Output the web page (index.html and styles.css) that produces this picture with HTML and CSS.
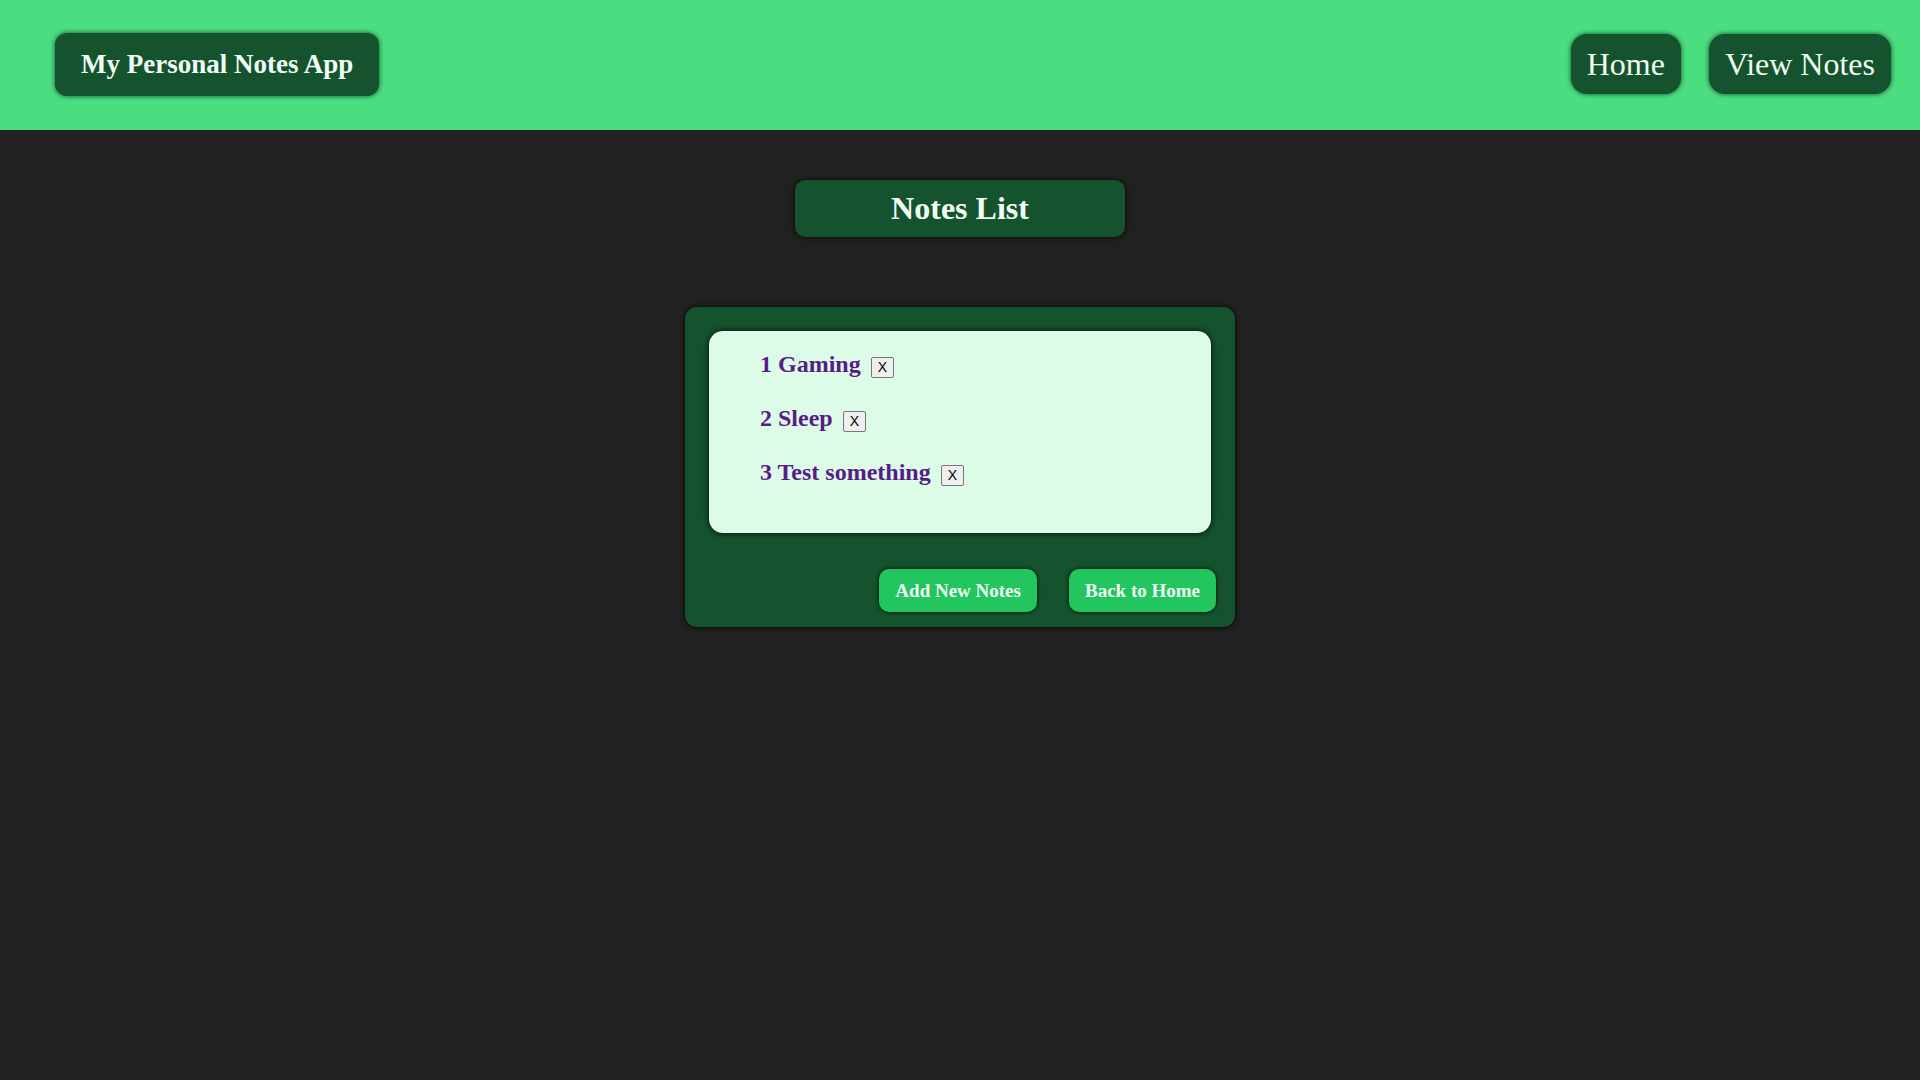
FILE: index.html
```html
<!DOCTYPE html>
<html lang="en">
<head>
<meta charset="utf-8">
<title>My Personal Notes App</title>
<link rel="stylesheet" href="styles.css">
</head>
<body>
<header class="topbar">
  <h1 class="logo">My Personal Notes App</h1>
  <nav class="nav">
    <a class="nav-link" href="#">Home</a>
    <a class="nav-link" href="#">View Notes</a>
  </nav>
</header>
<main class="main">
  <h2 class="page-title">Notes List</h2>
  <section class="card">
    <div class="notes-panel">
      <ul class="notes">
        <li class="note">1 Gaming<button class="remove">X</button></li>
        <li class="note">2 Sleep<button class="remove">X</button></li>
        <li class="note">3 Test something<button class="remove">X</button></li>
      </ul>
    </div>
    <div class="actions">
      <button class="action">Add New Notes</button>
      <button class="action">Back to Home</button>
    </div>
  </section>
</main>
</body>
</html>
```
FILE: styles.css
```css
* { box-sizing: border-box; }
body {
  margin: 0;
  background: #212121;
  font-family: "Liberation Serif", "Times New Roman", serif;
  min-height: 100vh;
}
.topbar {
  height: 130px;
  background: #4ade80;
  display: flex;
  align-items: center;
  justify-content: space-between;
  padding: 0 29px 2px 55px;
}
.logo {
  margin: 0;
  height: 63px;
  line-height: 63px;
  padding: 0 26px;
  font-size: 27px;
  font-weight: bold;
  color: #f0fdf4;
  background: #14532d;
  border-radius: 12px;
  box-shadow: 0 0 5px rgba(0,0,0,0.7);
}
.nav {
  display: flex;
  gap: 28px;
  align-items: center;
}
.nav-link {
  display: block;
  height: 60px;
  line-height: 60px;
  padding: 0 16px;
  font-size: 32px;
  color: #f0fdf4;
  background: #14532d;
  text-decoration: none;
  border-radius: 16px;
  box-shadow: 0 0 5px rgba(0,0,0,0.7);
}
.main {
  display: flex;
  flex-direction: column;
  align-items: center;
}
.page-title {
  margin: 50px 0 0;
  width: 330px;
  height: 57px;
  line-height: 57px;
  text-align: center;
  font-size: 32px;
  font-weight: bold;
  color: #f0fdf4;
  background: #14532d;
  border-radius: 10px;
  box-shadow: 0 0 5px rgba(0,0,0,0.9);
}
.card {
  margin-top: 70px;
  width: 550px;
  padding: 24px 24px 15px 24px;
  background: #14532d;
  border-radius: 12px;
  box-shadow: 0 0 5px rgba(0,0,0,0.9);
}
.notes-panel {
  background: #dcfce7;
  border-radius: 14px;
  box-shadow: 0 0 6px rgba(0,0,0,0.9);
}
.notes {
  list-style: none;
  margin: 0;
  padding: 6px 0 34px 51px;
}
.note {
  line-height: 54px;
  font-size: 24px;
  font-weight: bold;
  color: #581c87;
}
.remove {
  margin-left: 10px;
  padding: 2px 6px;
  font: 14px "Liberation Sans", Arial, sans-serif;
  color: #000;
  background: #efefef;
  border: 1px solid #767676;
  border-radius: 2px;
  line-height: 15px;
}
.actions {
  display: flex;
  justify-content: flex-end;
  gap: 32px;
  margin: 36px -5px 0 0;
}
.action {
  height: 43px;
  padding: 0 16px;
  font-family: "Liberation Serif", "Times New Roman", serif;
  font-size: 19px;
  font-weight: bold;
  color: #f0fdf4;
  background: #22c55e;
  border: none;
  border-radius: 10px;
  box-shadow: 0 0 4px rgba(0,0,0,0.9);
}
```
